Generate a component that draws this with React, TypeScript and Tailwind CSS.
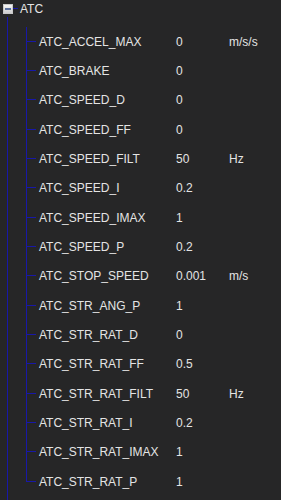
import React from 'react';

const params = [
  { name: 'ATC_ACCEL_MAX', value: '0', unit: 'm/s/s' },
  { name: 'ATC_BRAKE', value: '0', unit: '' },
  { name: 'ATC_SPEED_D', value: '0', unit: '' },
  { name: 'ATC_SPEED_FF', value: '0', unit: '' },
  { name: 'ATC_SPEED_FILT', value: '50', unit: 'Hz' },
  { name: 'ATC_SPEED_I', value: '0.2', unit: '' },
  { name: 'ATC_SPEED_IMAX', value: '1', unit: '' },
  { name: 'ATC_SPEED_P', value: '0.2', unit: '' },
  { name: 'ATC_STOP_SPEED', value: '0.001', unit: 'm/s' },
  { name: 'ATC_STR_ANG_P', value: '1', unit: '' },
  { name: 'ATC_STR_RAT_D', value: '0', unit: '' },
  { name: 'ATC_STR_RAT_FF', value: '0.5', unit: '' },
  { name: 'ATC_STR_RAT_FILT', value: '50', unit: 'Hz' },
  { name: 'ATC_STR_RAT_I', value: '0.2', unit: '' },
  { name: 'ATC_STR_RAT_IMAX', value: '1', unit: '' },
  { name: 'ATC_STR_RAT_P', value: '1', unit: '' },
];

const App: React.FC = () => {
  return (
    <div
      className="w-[281px] h-[500px] bg-[#262627] overflow-hidden text-[12px] text-[#e4e4e4] leading-none"
      style={{ fontFamily: '"Liberation Sans", Arial, sans-serif' }}
    >
      {/* Root node */}
      <div className="flex items-center h-[17px] pl-[3px]">
        <div className="w-[10px] h-[10px] border border-[#c8c8c8] bg-gradient-to-b from-[#f4f4f4] to-[#cfcfcf] flex items-center justify-center">
          <div className="w-[6px] h-[2px] bg-[#5a6f9c]" />
        </div>
        <div className="w-[5px] h-px bg-[#1818a8]" />
        <span className="ml-[2px]">ATC</span>
      </div>

      {/* Children */}
      <div className="flex">
        <div className="w-[7px] shrink-0" />
        <div className="w-px h-[483px] bg-[#1818a8] shrink-0" />
        <div className="w-[18px] shrink-0" />
        <div className="flex flex-col pt-[10px]">
          {params.map((p, i) => {
            const last = i === params.length - 1;
            return (
              <div key={p.name} className={`flex ${i % 3 === 2 ? 'h-[30px]' : 'h-[29px]'}`}>
                <div className="w-[10px] flex flex-col shrink-0">
                  <div className="w-px h-[14px] bg-[#1818a8]" />
                  <div className="w-[10px] h-px bg-[#1818a8]" />
                  {!last && <div className="w-px flex-1 bg-[#1818a8]" />}
                </div>
                <div className="flex items-center ml-[3px]">
                  <span className="w-[137px]">{p.name}</span>
                  <span className="w-[53px]">{p.value}</span>
                  <span>{p.unit}</span>
                </div>
              </div>
            );
          })}
        </div>
      </div>
    </div>
  );
};

export default App;
